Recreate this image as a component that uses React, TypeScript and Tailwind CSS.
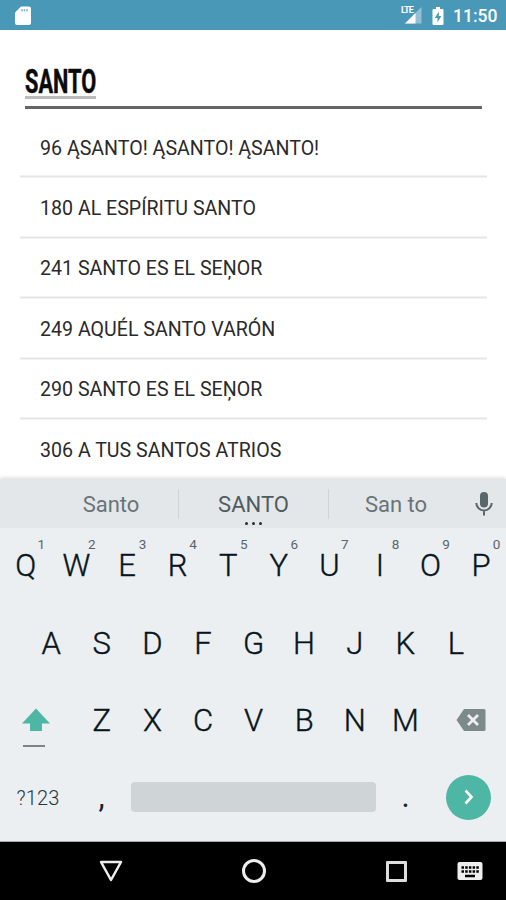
import React from "react";

const hymns = [
  "96 ĄSANTO! ĄSANTO! ĄSANTO!",
  "180 AL ESPÍRITU SANTO",
  "241 SANTO ES EL SEŅOR",
  "249 AQUÉL SANTO VARÓN",
  "290 SANTO ES EL SEŅOR",
  "306 A TUS SANTOS ATRIOS",
];

function StatusBar() {
  return (
    <header className="flex h-[30px] shrink-0 items-center bg-[#4a98b7] pl-[15px] pr-[9px] text-white">
      <svg width="16" height="20" viewBox="0 0 16 20" className="mt-px">
        <path d="M6 .5h8q2 0 2 2v14.500q0 2-2 2H2q-2 0-2-2V6.500z" fill="white" />
        <path d="M7 3v2.500M9.500 3v2.500M12 3v2.500" stroke="#4a98b7" strokeWidth="1.500" opacity=".65" />
      </svg>
      <div className="ml-auto flex items-center">
        <div className="relative h-[20px] w-[22px]">
          <svg width="22" height="20" viewBox="0 0 22 20">
            <path d="M21.500 2v16.500H5z" fill="white" opacity=".4" />
            <path d="M15.500 8v10.500H5z" fill="white" />
          </svg>
          <span className="absolute left-px top-[1px] text-[9px] font-bold leading-[9px] tracking-[-0.8px]">LTE</span>
        </div>
        <svg width="12" height="18" viewBox="0 0 12 18" className="ml-[10px] mt-px">
          <path d="M4 0h4v2h2.500q1 0 1 1v14q0 1-1 1h-9q-1 0-1-1V3q0-1 1-1H4z" fill="white" />
          <path d="M6.800 4.500 2.800 11h2.700v4.500L9.300 9H6.800z" fill="#4a98b7" />
        </svg>
        <span className="ml-[9px] w-[44px] whitespace-nowrap pt-[2px] text-[17.500px] font-medium leading-[30px]">11:50</span>
      </div>
    </header>
  );
}

function Key({ label, hint }: { label: string; hint?: string }) {
  return (
    <div className="relative flex w-[50.6px] shrink-0 items-center justify-center pl-px text-[31px] font-light leading-[36px] text-[#07151c]">
      <span className="[-webkit-text-stroke:0.4px_#07151c]">{label}</span>
      {hint && <span className="absolute left-[37.500px] top-[-11px] text-[13.500px] font-normal leading-[14px] text-[#59656b]">{hint}</span>}
    </div>
  );
}

function Keyboard() {
  return (
    <section className="flex h-[363px] shrink-0 flex-col border-b border-[#a4a8aa] bg-[#eceff1] shadow-[0_-1px_4px_rgba(0,0,0,0.16)]">
      <div className="flex h-[49px] shrink-0 items-center bg-[#e4e7e9] pl-[44px] pt-px text-[22px] text-[#697378]">
        <div className="w-[134px] pt-px text-center">Santo</div>
        <div className="h-[30px] w-px bg-[#cfd3d5]" />
        <div className="relative w-[149px] pt-px text-center text-[#505b60]">
          SANTO
          <div className="absolute bottom-[-4px] left-[66px] flex gap-[4px]">
            <i className="size-[3px] rounded-full bg-[#222d32]" />
            <i className="size-[3px] rounded-full bg-[#222d32]" />
            <i className="size-[3px] rounded-full bg-[#222d32]" />
          </div>
        </div>
        <div className="h-[30px] w-px bg-[#cfd3d5]" />
        <div className="w-[134px] pt-px text-center">San to</div>
        <svg width="18" height="25" viewBox="0 0 18 25" className="ml-[12px]">
          <rect x="5" y="0" width="8" height="15.500" rx="4" fill="#59666c" />
          <path d="M1.300 11a7.700 7.500 0 0 0 15.400 0M9 18.500v5" fill="none" stroke="#59666c" strokeWidth="2" />
        </svg>
      </div>
      <div className="mt-[20px] flex h-[36px]">
        {"QWERTYUIOP".split("").map((k, i) => <Key key={k} label={k} hint={String((i + 1) % 10)} />)}
      </div>
      <div className="mt-[42px] flex h-[36px] justify-center">
        {"ASDFGHJKL".split("").map((k) => <Key key={k} label={k} />)}
      </div>
      <div className="mt-[41px] flex h-[36px]">
        <div className="flex w-[76px] shrink-0 flex-col pl-[21px] pt-[5px]">
          <svg width="30" height="24" viewBox="0 0 30 24" className="shrink-0">
            <path d="M15 .5 29 15.500h-8V23H9v-7.500H1z" fill="#4db6a5" />
          </svg>
          <div className="ml-[2px] mt-[13px] h-[2px] w-[22px] shrink-0 bg-[#7d8588]" />
        </div>
        {"ZXCVBNM".split("").map((k) => <Key key={k} label={k} />)}
        <svg width="30" height="24" viewBox="0 0 30 24" className="ml-[26px] mt-[5px] shrink-0">
          <path d="M8 1h20q1.500 0 1.500 1.500v19q0 1.500-1.500 1.500H8L.5 12z" fill="#7d8a8c" />
          <path d="m12 7 10 10m0-10L12 17" stroke="#eceff1" strokeWidth="2.800" />
        </svg>
      </div>
      <div className="mt-[35px] flex h-[46px] items-center">
        <div className="w-[76px] pt-px text-center text-[20px] font-light tracking-[0.2px] text-[#26363d]">?123</div>
        <div className="w-[51px] text-center text-[31px] text-[#17242b]">,</div>
        <div className="ml-[4px] h-[30px] w-[245px] rounded-[4px] bg-[#cfd4d6]" />
        <div className="w-[59px] text-center text-[31px] text-[#17242b]">.</div>
        <div className="ml-[11px] flex size-[45px] items-center justify-center rounded-full bg-[#4db6a5]">
          <svg width="10" height="16" viewBox="0 0 10 16">
            <path d="m1.500 1.500 6 6.500-6 6.500" fill="none" stroke="white" strokeWidth="2.600" />
          </svg>
        </div>
      </div>
    </section>
  );
}

function NavigationBar() {
  return (
    <nav className="flex h-[58px] shrink-0 items-center bg-black pl-[99px]">
      <svg width="24" height="22" viewBox="0 0 24 22" fill="none" stroke="#eee" strokeWidth="2.500" strokeLinejoin="round">
        <path d="M2 2h20l-10 18z" />
      </svg>
      <div className="ml-[119px] size-[24px] rounded-full border-[3px] border-[#eee]" />
      <div className="ml-[119.500px] size-[21px] rounded-[1px] border-[3px] border-[#ddd]" />
      <svg width="26" height="20" viewBox="0 0 26 20" className="ml-[50px]">
        <rect x=".5" y="1" width="25" height="18" rx="2" fill="#eee" />
        <path d="M4.500 6.500h18M4.500 10.500h18" stroke="black" strokeWidth="2.500" strokeDasharray="2.500 1.200" />
        <path d="M8 15h10" stroke="black" strokeWidth="2.500" />
      </svg>
    </nav>
  );
}

export default function App() {
  return (
    <div className="flex h-[900px] w-[506px] flex-col overflow-hidden bg-white font-[Roboto,sans-serif]">
      <StatusBar />
      <main className="flex h-[449px] shrink-0 flex-col">
        <div className="ml-[25px] mt-[33px] h-[46px] w-[457px] shrink-0 border-b-[3px] border-[#666]">
          <div className="h-[36px] w-[71px] border-b-[3px] border-[#bcbcbc]">
            <span className="inline-block origin-left scale-x-[0.64] text-[34px] font-bold leading-[37px] text-[#0b0b0b] [-webkit-text-stroke:0.5px_#0b0b0b]">SANTO</span>
          </div>
        </div>
        <ul className="ml-[20px] mt-[8px] w-[467px]">
          {hymns.map((hymn) => (
            <li key={hymn} className="flex h-[60.4px] translate-y-[0.5px] items-center border-b-2 border-[#e5e5e5] pl-[20px] pt-[3px] text-[19.600px] leading-[24px] text-[#2a2a2a] last:border-transparent">
              {hymn}
            </li>
          ))}
        </ul>
      </main>
      <Keyboard />
      <NavigationBar />
    </div>
  );
}
